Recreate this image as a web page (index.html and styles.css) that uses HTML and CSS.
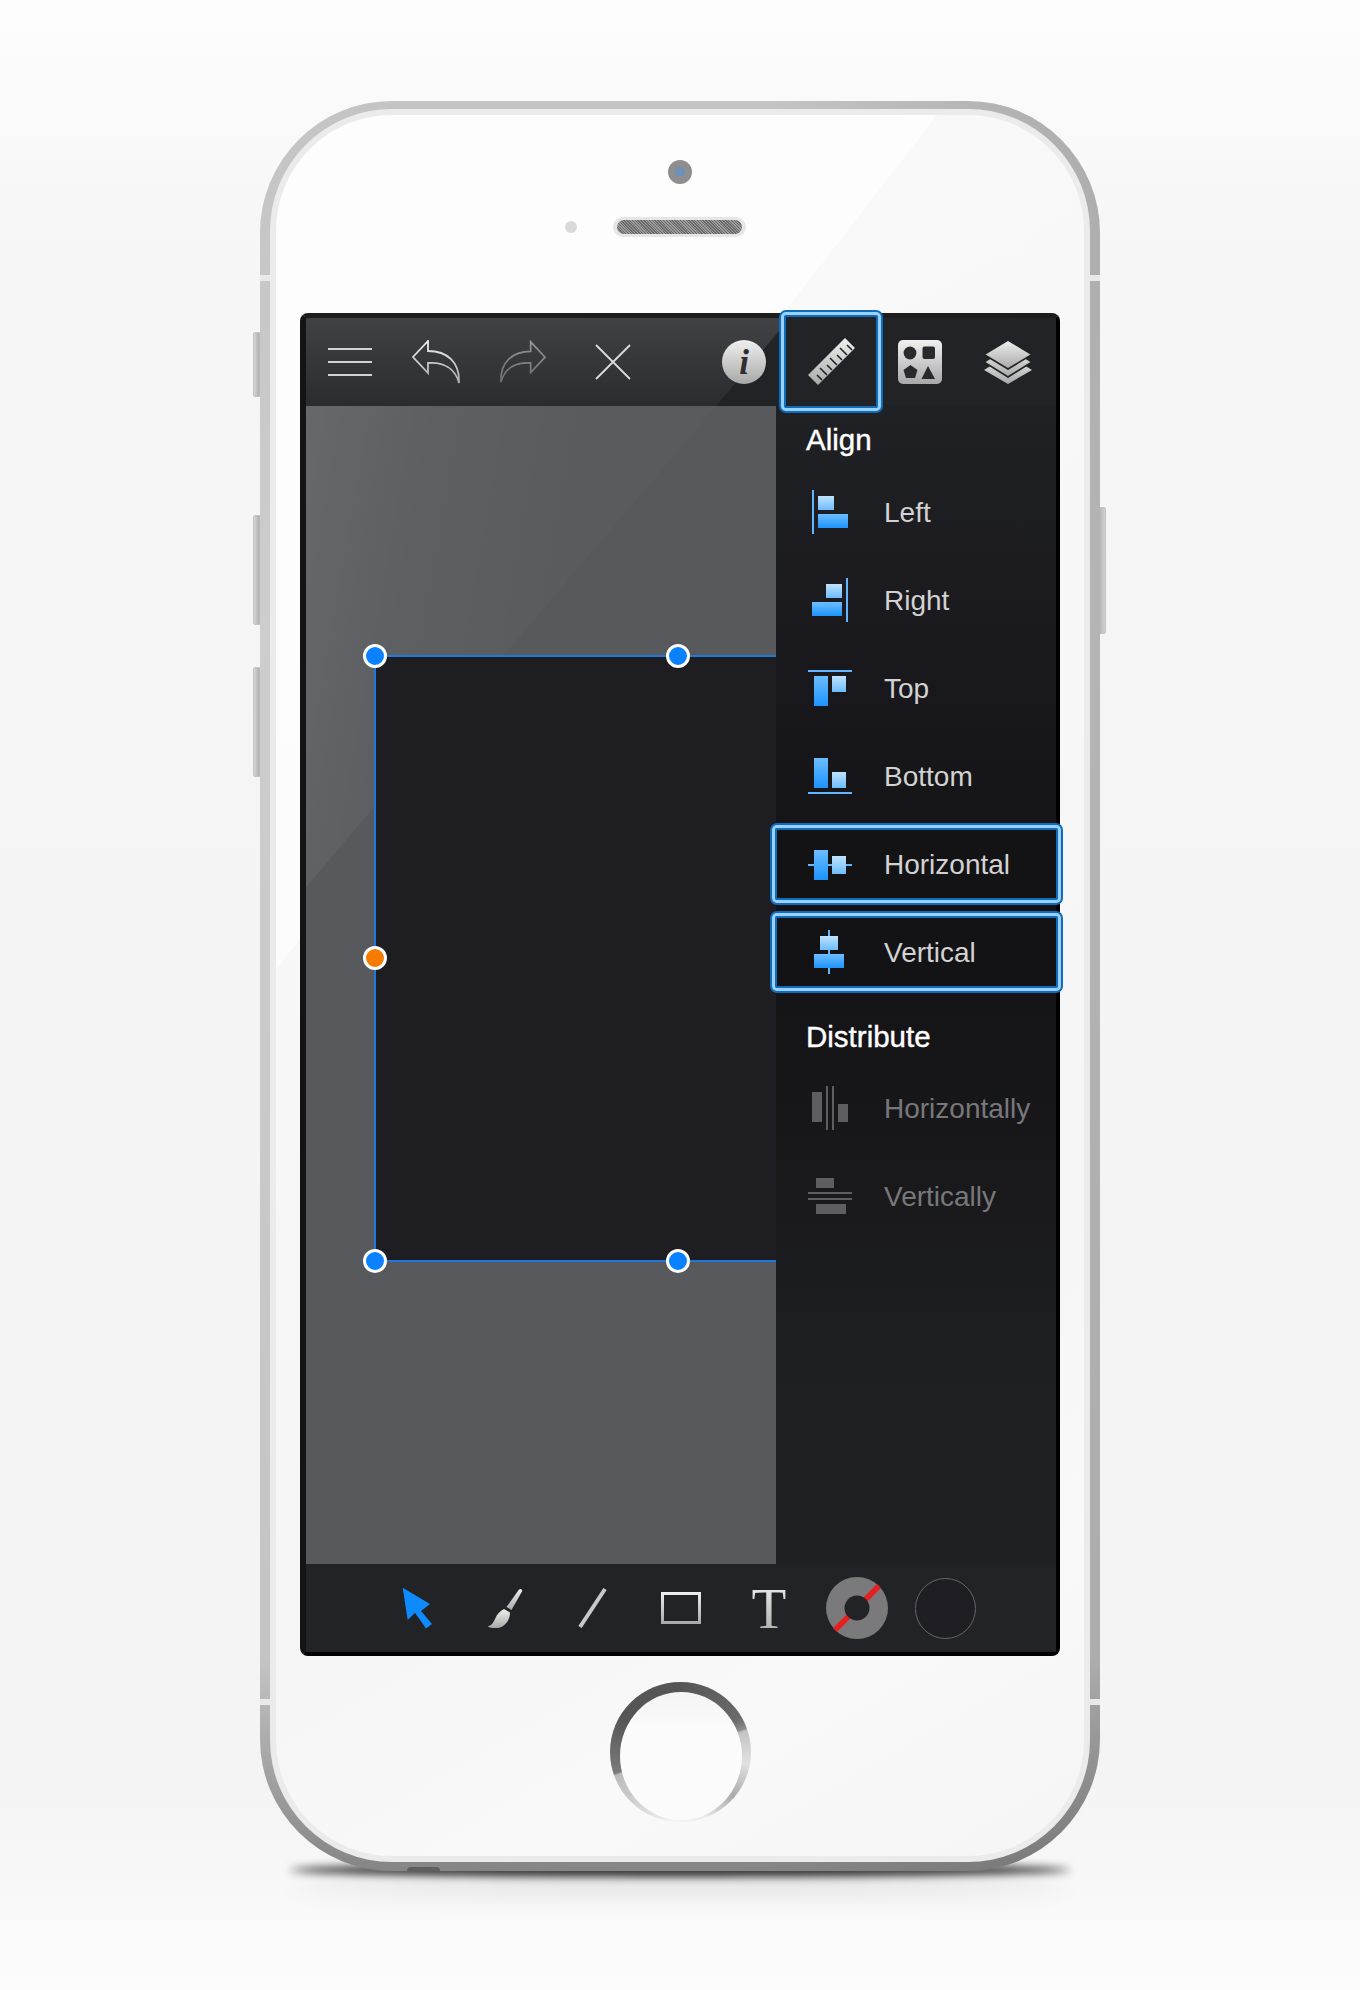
FILE: index.html
```html
<!DOCTYPE html>
<html>
    <head>
        <meta charset="utf-8">
        <title>Align panel</title>
        <link rel="stylesheet" href="styles.css">
    </head>
    <body>
        <!-- shared gradients for the icons -->
        <svg class="defs">
            <defs>
                <linearGradient id="silver" x1="0" y1="0" x2="0" y2="1">
                    <stop offset="0" stop-color="#f0f0f0"/>
                    <stop offset="1" stop-color="#a8a8a8"/>
                </linearGradient>
                <linearGradient id="light" x1="0" y1="0" x2="0" y2="1">
                    <stop offset="0" stop-color="#bfe2ff"/>
                    <stop offset="1" stop-color="#6dbdff"/>
                </linearGradient>
                <linearGradient id="strong" x1="0" y1="0" x2="0" y2="1">
                    <stop offset="0" stop-color="#6dbdff"/>
                    <stop offset="1" stop-color="#1c94ff"/>
                </linearGradient>
            </defs>
        </svg>

        <div class="phone">
            <div class="side-btn side-mute"></div>
            <div class="side-btn side-up"></div>
            <div class="side-btn side-down"></div>
            <div class="side-btn side-power"></div>
            <div class="drop-shadow"></div>
            <div class="band band-tl"></div>
            <div class="band band-tr"></div>
            <div class="band band-bl"></div>
            <div class="band band-br"></div>
            <div class="jack"></div>

            <div class="rim">
                <div class="face">
                    <div class="face-top">
                        <div class="camera"></div>
                        <div class="ear-row">
                            <div class="sensor"></div>
                            <div class="speaker"><div class="speaker-mesh"></div></div>
                        </div>
                    </div>

                    <div class="screen">
                        <header class="toolbar">
                            <div class="tb-group tb-left">
                                <svg class="ic" width="44" height="30" viewBox="0 0 44 30">
                                    <path d="M0 2H44M0 15H44M0 28H44" stroke="#d2d2d2" stroke-width="1.8" fill="none"/>
                                </svg>
                                <svg class="ic" width="48" height="44" viewBox="0 0 48 44">
                                    <path class="arrow" d="M16 1 L1 17 L16 33 V23 C31 22 43 28 47 43 C48 22 35 11 16 11 Z"/>
                                </svg>
                                <svg class="ic dim" width="46" height="44" viewBox="0 0 48 44">
                                    <path class="arrow" d="M32 1 L47 17 L32 33 V23 C17 22 5 28 1 43 C0 22 13 11 32 11 Z"/>
                                </svg>
                                <svg class="ic close" width="36" height="36" viewBox="0 0 36 36">
                                    <path d="M1 1L35 35M35 1L1 35" stroke="#dcdcdc" stroke-width="1.8" fill="none"/>
                                </svg>
                            </div>
                            <div class="tb-group tb-right">
                                <svg class="ic" width="44" height="44" viewBox="0 0 44 44">
                                    <circle cx="22" cy="22" r="22" fill="url(#silver)"/>
                                    <text class="info-i" x="22" y="34" text-anchor="middle">i</text>
                                </svg>
                                <div class="ruler-btn">
                                    <svg class="ic" width="48" height="48" viewBox="0 0 48 48">
                                        <path d="M0 37L37 0L47 10L10 47Z" fill="url(#silver)"/>
                                        <path d="M14 42L9 37M19 37L12 30M24 32L19 27M29 27L22 20M34 22L29 17M39 17L32 10M44 12L39 7" stroke="#222326" stroke-width="1.6" fill="none"/>
                                    </svg>
                                </div>
                                <svg class="ic" width="44" height="44" viewBox="0 0 44 44">
                                    <rect width="44" height="44" rx="5" fill="url(#silver)"/>
                                    <circle cx="12" cy="13" r="6.4" fill="#2a2a2c"/>
                                    <rect x="24.5" y="6.5" width="12.5" height="12.5" rx="2" fill="#2a2a2c"/>
                                    <path d="M12.5 25L19.5 30L17 38H8L5.5 30Z" fill="#2a2a2c"/>
                                    <path d="M30 26L37 39H23.5Z" fill="#2a2a2c"/>
                                </svg>
                                <svg class="ic" width="48" height="44" viewBox="0 0 48 44">
                                    <path d="M0 30L24 15L48 30L24 44Z" fill="url(#silver)"/>
                                    <path d="M0 22L24 7L48 22L24 37Z" fill="url(#silver)" stroke="#222326" stroke-width="1.6"/>
                                    <path d="M0 14.5L24 0L48 14.5L24 29Z" fill="url(#silver)" stroke="#222326" stroke-width="1.6"/>
                                </svg>
                            </div>
                        </header>

                        <div class="workspace">
                            <div class="canvas">
                                <div class="selection">
                                    <span class="handle h-tl"></span>
                                    <span class="handle h-tm"></span>
                                    <span class="handle handle-pivot h-ml"></span>
                                    <span class="handle h-bl"></span>
                                    <span class="handle h-bm"></span>
                                </div>
                            </div>

                            <aside class="panel">
                                <h4 class="heading heading-align">Align</h4>

                                <div class="row">
                                    <svg class="row-ic" width="44" height="44" viewBox="0 0 44 44">
                                        <rect class="edge" x="4" y="0" width="2" height="44"/>
                                        <rect class="lt" x="10" y="6" width="16" height="14"/>
                                        <rect class="st" x="10" y="24" width="30" height="14"/>
                                    </svg>
                                    <span>Left</span>
                                </div>
                                <div class="row">
                                    <svg class="row-ic" width="44" height="44" viewBox="0 0 44 44">
                                        <rect class="edge" x="38" y="0" width="2" height="44"/>
                                        <rect class="lt" x="18" y="6" width="16" height="14"/>
                                        <rect class="st" x="4" y="24" width="30" height="14"/>
                                    </svg>
                                    <span>Right</span>
                                </div>
                                <div class="row">
                                    <svg class="row-ic" width="44" height="44" viewBox="0 0 44 44">
                                        <rect class="edge" x="0" y="4" width="44" height="2"/>
                                        <rect class="st" x="6" y="10" width="14" height="30"/>
                                        <rect class="lt" x="24" y="10" width="14" height="16"/>
                                    </svg>
                                    <span>Top</span>
                                </div>
                                <div class="row">
                                    <svg class="row-ic" width="44" height="44" viewBox="0 0 44 44">
                                        <rect class="edge" x="0" y="38" width="44" height="2"/>
                                        <rect class="st" x="6" y="4" width="14" height="30"/>
                                        <rect class="lt" x="24" y="18" width="14" height="16"/>
                                    </svg>
                                    <span>Bottom</span>
                                </div>
                                <div class="row row-on">
                                    <svg class="row-ic" width="44" height="44" viewBox="0 0 44 44">
                                        <rect class="edge" x="0" y="22" width="44" height="2"/>
                                        <rect class="st" x="6" y="8" width="14" height="30"/>
                                        <rect class="lt" x="24" y="14" width="14" height="18"/>
                                    </svg>
                                    <span>Horizontal</span>
                                </div>
                                <div class="row row-on">
                                    <svg class="row-ic" width="44" height="44" viewBox="0 0 44 44">
                                        <rect class="edge" x="20" y="0" width="2" height="44"/>
                                        <rect class="lt" x="12" y="6" width="18" height="14"/>
                                        <rect class="st" x="6" y="24" width="30" height="14"/>
                                    </svg>
                                    <span>Vertical</span>
                                </div>

                                <h4 class="heading heading-dist">Distribute</h4>

                                <div class="row row-off">
                                    <svg class="row-ic" width="44" height="44" viewBox="0 0 44 44">
                                        <rect x="4" y="6" width="10" height="30"/>
                                        <rect x="18" y="0" width="2" height="44"/>
                                        <rect x="24" y="0" width="2" height="44"/>
                                        <rect x="30" y="18" width="10" height="18"/>
                                    </svg>
                                    <span>Horizontally</span>
                                </div>
                                <div class="row row-off">
                                    <svg class="row-ic" width="44" height="44" viewBox="0 0 44 44">
                                        <rect x="8" y="4" width="18" height="10"/>
                                        <rect x="0" y="18" width="44" height="2"/>
                                        <rect x="0" y="24" width="44" height="2"/>
                                        <rect x="8" y="30" width="30" height="10"/>
                                    </svg>
                                    <span>Vertically</span>
                                </div>
                            </aside>
                        </div>

                        <footer class="tools">
                            <div class="tool">
                                <svg width="30" height="42" viewBox="0 0 30 42">
                                    <path d="M0.7 0.7L28 17L19 24L30 37L24 41.5L13 25.7L5.7 33Z" fill="#0d8bff"/>
                                </svg>
                            </div>
                            <div class="tool">
                                <svg width="35" height="42" viewBox="0 0 35 42">
                                    <path d="M31 2.5C32.5 1 35 2.5 34 4.5L23.5 23L18.5 20Z" fill="url(#silver)"/>
                                    <path d="M16 22L22 25.5C22 33 17 41 8 41C4 41 1 41 0 39C4 38.5 5 36 7 32C9 27 12 24 16 22Z" fill="url(#silver)"/>
                                </svg>
                            </div>
                            <div class="tool">
                                <svg width="30" height="42" viewBox="0 0 30 42">
                                    <path d="M27 2L2 40" stroke="#c8c8c8" stroke-width="4" fill="none"/>
                                </svg>
                            </div>
                            <div class="tool">
                                <svg width="40" height="32" viewBox="0 0 40 32">
                                    <path fill-rule="evenodd" d="M0 0H40V32H0ZM3 3V29H37V3Z" fill="url(#silver)"/>
                                </svg>
                            </div>
                            <div class="tool"><span class="tool-t">T</span></div>
                            <div class="tool">
                                <svg width="62" height="62" viewBox="0 0 62 62">
                                    <circle cx="31" cy="31" r="31" fill="#7a7a7c"/>
                                    <path d="M9 53L53 9" stroke="#e81d1d" stroke-width="5.5"/>
                                    <circle cx="31" cy="31" r="12.5" fill="#222326"/>
                                </svg>
                            </div>
                            <div class="tool"><div class="swatch"></div></div>
                        </footer>
                    </div>

                    <div class="home">
                        <div class="home-cap"></div>
                    </div>
                </div>
            </div>
        </div>
    </body>
</html>
```

FILE: styles.css
```css
html, body {
    margin: 0;
    padding: 0;
}

body {
    box-sizing: border-box;
    height: 1990px;
    padding-top: 101px;
    overflow: hidden;
    font-family: "Liberation Sans", Arial, sans-serif;
    background: linear-gradient(#fdfdfd 0, #f6f6f6 12%, #f4f4f4 55%, #f4f4f4 90%, #fcfcfc 100%);
}

.defs {
    position: absolute;
    width: 0;
    height: 0;
}

/* phone body */
.phone {
    position: relative;
    box-sizing: border-box;
    width: 840px;
    height: 1770px;
    margin: 0 auto;
    padding: 8px 10px 9px;
    border-radius: 132px;
    background:
        linear-gradient(90deg, rgba(0, 0, 0, 0) 60%, rgba(0, 0, 0, 0.12)),
        linear-gradient(#c4c4c4 0, #cdcdcd 30%, #c4c4c4 88%, #a0a0a0 95%, #858585 100%);
}

.rim {
    height: 100%;
    box-sizing: border-box;
    padding: 6px;
    border-radius: 122px;
    background: #ebebeb;
}

.face {
    position: relative;
    height: 100%;
    display: flex;
    flex-direction: column;
    align-items: center;
    border-radius: 116px;
    background: linear-gradient(150deg, #fafafa 0, #f7f7f7 45%, #f5f5f5 70%, #f9f9f9 85%, #f5f5f5 100%);
}

/* glare on the glass */
.face::before {
    content: "";
    position: absolute;
    top: 0;
    left: 0;
    width: 661px;
    height: 855px;
    border-top-left-radius: 116px;
    background: rgba(255, 255, 255, 0.6);
    clip-path: polygon(0 0, 100% 0, 0 100%);
}

.side-btn {
    position: absolute;
    z-index: -1;
    width: 12px;
    border-radius: 3px;
    background: linear-gradient(90deg, #dedede, #b4b4b4 45%, #d6d6d6);
    box-shadow: inset 0 0 0 1px #c4c4c4;
}

.side-mute { left: -7px; top: 231px; height: 65px; }
.side-up { left: -7px; top: 414px; height: 110px; }
.side-down { left: -7px; top: 566px; height: 110px; }
.side-power { right: -6px; top: 406px; height: 127px; }

.drop-shadow {
    position: absolute;
    z-index: -1;
    left: 30px;
    right: 30px;
    bottom: -6px;
    height: 14px;
    border-radius: 50%;
    background: rgba(0, 0, 0, 0.8);
    box-shadow: 0 14px 24px rgba(0, 0, 0, 0.14);
    filter: blur(4px);
}

.band {
    position: absolute;
    width: 10px;
    height: 6px;
    background: #e9e9e9;
}

.band-tl { left: 0; top: 174px; }
.band-tr { right: 0; top: 174px; }
.band-bl { left: 0; bottom: 166px; }
.band-br { right: 0; bottom: 166px; }

.jack {
    position: absolute;
    left: 147px;
    bottom: 0;
    width: 33px;
    height: 4px;
    border-radius: 10px 10px 0 0;
    background: #5f5f5f;
}

/* camera and speaker */
.face-top {
    position: relative;
    flex: none;
    height: 198px;
    box-sizing: border-box;
    padding-top: 45px;
    display: flex;
    flex-direction: column;
    align-items: center;
}

.camera {
    width: 24px;
    height: 24px;
    box-sizing: border-box;
    border: 7px solid #8e8e8e;
    border-radius: 50%;
    background: #6e8fb8;
}

.ear-row {
    display: flex;
    align-items: center;
    gap: 36px;
    margin-top: 33px;
    margin-right: 49px;
}

.sensor {
    width: 12px;
    height: 12px;
    border-radius: 50%;
    background: #d9d9d9;
}

.speaker {
    box-sizing: border-box;
    width: 133px;
    height: 20px;
    padding: 3px 4px;
    border-radius: 10px;
    background: #e6e6e6;
}

.speaker-mesh {
    height: 14px;
    border-radius: 7px;
    background: repeating-linear-gradient(45deg, #6c6c6c 0, #6c6c6c 1px, #9a9a9a 1px, #9a9a9a 2px);
}

/* screen */
.screen {
    flex: none;
    box-sizing: border-box;
    position: relative;
    width: 760px;
    height: 1343px;
    display: flex;
    flex-direction: column;
    border-style: solid;
    border-width: 5px 4px 4px 6px;
    border-color: #1d1d1d #000 #000 #141414;
    border-radius: 8px;
    background: #000;
}

.toolbar {
    position: relative;
    z-index: 1;
    flex: none;
    height: 88px;
    display: flex;
    justify-content: space-between;
    align-items: center;
    background: #222326;
}

.toolbar::before {
    content: "";
    position: absolute;
    top: 0;
    left: 0;
    width: 484px;
    height: 88px;
    background: linear-gradient(rgba(255, 255, 255, 0.14), rgba(255, 255, 255, 0.04));
    clip-path: polygon(0 0, 100% 0, 410px 100%, 0 100%);
}

.tb-group {
    position: relative;
    display: flex;
    align-items: center;
}

.tb-left {
    gap: 40px;
    padding-left: 22px;
}

.tb-right {
    align-self: stretch;
    gap: 42px;
    padding-right: 24px;
}

.ic {
    display: block;
    position: relative;
}

.dim {
    opacity: 0.5;
}

.close {
    margin-left: 9px;
}

.arrow {
    fill: none;
    stroke: url(#silver);
    stroke-width: 1.8;
}

.info-i {
    font-family: "Liberation Serif", serif;
    font-weight: bold;
    font-style: italic;
    font-size: 35px;
    fill: #2e2e30;
}

.ruler-btn {
    position: relative;
    align-self: stretch;
    display: flex;
    align-items: center;
}

.ruler-btn::before {
    content: "";
    position: absolute;
    top: -6px;
    bottom: -5px;
    left: -27px;
    right: -25px;
    box-sizing: border-box;
    border: 3px solid #9ad0ff;
    border-radius: 5px;
    background: #222326;
    box-shadow: 0 0 0 2px #0f6cb8, inset 0 0 0 2px #0f6cb8;
}

/* canvas + side panel */
.workspace {
    flex: 1;
    display: flex;
    min-height: 0;
}

.canvas {
    position: relative;
    flex: none;
    width: 470px;
    overflow: hidden;
    background: #58595d;
}

.canvas::before {
    content: "";
    position: absolute;
    top: 0;
    left: 0;
    width: 410px;
    height: 481px;
    background: linear-gradient(100deg, rgba(255, 255, 255, 0.09) 0, rgba(255, 255, 255, 0.04) 25%, rgba(255, 255, 255, 0.015) 55%, rgba(255, 255, 255, 0.006) 100%);
    clip-path: polygon(0 0, 100% 0, 0 100%);
}

.selection {
    position: absolute;
    left: 68px;
    top: 249px;
    width: 500px;
    height: 607px;
    box-sizing: border-box;
    border: 2px solid #1f78e0;
    background: #1e1d22;
}

.handle {
    position: absolute;
    width: 24px;
    height: 24px;
    box-sizing: border-box;
    border: 3px solid #fff;
    border-radius: 50%;
    background: #0a82ff;
}

.handle-pivot {
    background: #f57c00;
}

.h-tl { left: -13px; top: -13px; }
.h-tm { left: 290px; top: -13px; }
.h-ml { left: -13px; top: 289px; }
.h-bl { left: -13px; top: 592px; }
.h-bm { left: 290px; top: 592px; }

.panel {
    position: relative;
    flex: none;
    width: 280px;
    background: linear-gradient(#202124 0, #1a1a1e 20%, #131316 42%, #17171a 62%, #1f2023 85%);
    color: #d2d2d2;
    font-size: 28px;
}

.heading {
    margin: 0 0 0 30px;
    height: 34px;
    line-height: 34px;
    font-size: 29.5px;
    font-weight: normal;
    color: #fff;
    -webkit-text-stroke: 0.4px #fff;
}

.heading-align {
    padding-top: 17px;
    padding-bottom: 12px;
}

.heading-dist {
    padding-top: 23px;
    padding-bottom: 11px;
}

.row {
    position: relative;
    height: 88px;
    display: flex;
    align-items: center;
    gap: 32px;
    padding-left: 32px;
}

.row > * {
    position: relative;
}

.row-on::before {
    content: "";
    position: absolute;
    top: 4px;
    bottom: 6px;
    left: -4px;
    right: -5px;
    border: 3px solid #9ad0ff;
    border-radius: 5px;
    background: #131316;
    box-shadow: 0 0 0 2px #0f6cb8, inset 0 0 0 2px #0f6cb8;
}

.row-off {
    color: #78787b;
}

.row-off .row-ic {
    fill: #5e5e60;
}

.row-ic {
    flex: none;
    display: block;
    margin-top: -2px;
}

.edge {
    fill: #62b6ff;
}

.lt {
    fill: url(#light);
}

.st {
    fill: url(#strong);
}

/* bottom tools */
.tools {
    flex: none;
    height: 88px;
    display: flex;
    justify-content: center;
    background: #222326;
}

.tool {
    width: 88px;
    display: flex;
    align-items: center;
    justify-content: center;
}

.tool svg {
    display: block;
}

.tool-t {
    font-family: "Liberation Serif", serif;
    font-size: 57px;
    line-height: 57px;
    color: transparent;
    background: linear-gradient(#f0f0f0, #a8a8a8);
    -webkit-background-clip: text;
    background-clip: text;
}

.swatch {
    width: 61px;
    height: 61px;
    box-sizing: border-box;
    border: 1px solid #66666a;
    border-radius: 50%;
    background: #1e1e24;
}

/* home button */
.home {
    position: relative;
    flex: none;
    box-sizing: border-box;
    width: 141px;
    height: 140px;
    margin-top: 26px;
    padding: 10px 9px 2px 10px;
    border-radius: 50%;
    background: conic-gradient(#555 0deg, #6a6a6a 60deg, #8c8c8c 70deg, #c4c4c4 72deg, #e0e0e0 100deg, #aaa 130deg, #ececec 160deg, #f4f4f4 185deg, #c9c9c9 230deg, #bcbcbc 250deg, #7a7a7a 252deg, #565656 300deg, #555 360deg);
}

.home-cap {
    height: 100%;
    border-radius: 50%;
    background: linear-gradient(#f4f4f4, #fbfbfb 30%, #fbfbfb);
}
```
